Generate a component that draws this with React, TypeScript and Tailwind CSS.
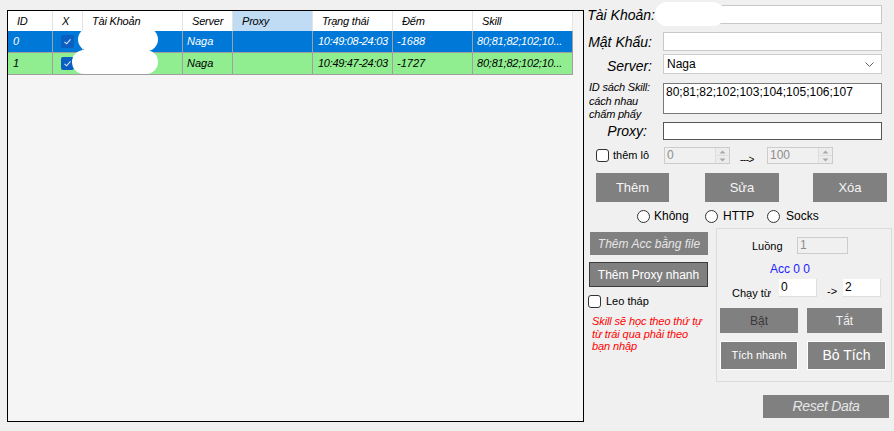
import React from 'react';

const cols = [
  { w: 'w-[45px]', h: 'ID' },
  { w: 'w-[30px]', h: 'X' },
  { w: 'w-[100px]', h: 'Tài Khoản' },
  { w: 'w-[50px]', h: 'Server' },
  { w: 'w-[80px]', h: 'Proxy' },
  { w: 'w-[80px]', h: 'Trạng thái' },
  { w: 'w-[80px]', h: 'Đếm' },
  { w: 'w-[100px]', h: 'Skill' },
];

const rows = [
  { bg: 'bg-[#0078d7] text-white', id: '0', time: '10:49:08-24:03', dem: '-1688' },
  { bg: 'bg-[#90ee90] text-black', id: '1', time: '10:49:47-24:03', dem: '-1727' },
];

function RowCheck() {
  return (
    <span className="w-[13px] h-[13px] rounded-[2px] bg-[#0a5fc0] flex items-center justify-center">
      <svg width="9" height="9" viewBox="0 0 9 9">
        <path d="M1.5 4.8 L3.6 6.8 L7.5 2.4" fill="none" stroke="#dbe9f8" strokeWidth="1.1" />
      </svg>
    </span>
  );
}

function Box() {
  return <span className="w-[13px] h-[13px] rounded-[3px] border border-[#333333] bg-white shrink-0" />;
}

function Radio() {
  return <span className="w-[13px] h-[13px] rounded-full border border-[#333333] bg-white shrink-0" />;
}

function Spin({ v }: { v: string }) {
  return (
    <div className="w-[66px] h-[17px] border border-[#cccccc] bg-[#f0f0f0] flex">
      <span className="flex-1 pl-[2px] text-[12px] leading-[15px] text-[#8d8d8d]">{v}</span>
      <div className="w-[14px] flex flex-col border-l border-[#dddddd]">
        <div className="flex-1 flex items-center justify-center bg-[#ececec] border-b border-[#dddddd]">
          <svg width="7" height="4" viewBox="0 0 7 4"><path d="M0.5 3.5 L3.5 0.5 L6.5 3.5Z" fill="#a8a8a8" /></svg>
        </div>
        <div className="flex-1 flex items-center justify-center bg-[#ececec]">
          <svg width="7" height="4" viewBox="0 0 7 4"><path d="M0.5 0.5 L3.5 3.5 L6.5 0.5Z" fill="#a8a8a8" /></svg>
        </div>
      </div>
    </div>
  );
}

export default function App() {
  return (
    <div className="relative w-[894px] h-[431px] bg-[#f0f0f0] flex font-['Liberation_Sans',Arial,sans-serif] text-black overflow-hidden">
      {/* grid */}
      <div className="ml-[7px] mt-[10px] w-[577px] h-[412px] border border-black bg-[#f5f5f5] shrink-0">
        <div className="flex h-[20px]">
          {cols.map((c, i) => (
            <div
              key={i}
              className={`${c.w} h-full border-r border-[#e3e3e3] pl-[9px] text-[11px] italic leading-[20px] tracking-[-0.2px] ${
                c.h === 'Proxy' ? 'bg-[#bfdcf4]' : 'bg-white'
              }`}
            >
              {c.h}
            </div>
          ))}
        </div>
        {rows.map((r, ri) => (
          <div key={ri} className={`flex h-[22px] w-[565px] border-b border-[#a0a0a0] ${r.bg}`}>
            <div className="w-[45px] border-r border-[#a0a0a0] pl-[5px] text-[11px] italic leading-[21px]">{r.id}</div>
            <div className="w-[30px] border-r border-[#a0a0a0] flex items-center justify-center">
              <RowCheck />
            </div>
            <div className="w-[100px] border-r border-[#a0a0a0]" />
            <div className="w-[50px] border-r border-[#a0a0a0] pl-[4px] text-[11px] italic leading-[21px]">Naga</div>
            <div className="w-[80px] border-r border-[#a0a0a0]" />
            <div className="w-[80px] border-r border-[#a0a0a0] pl-[5px] text-[11px] italic leading-[21px] tracking-[-0.3px] whitespace-nowrap overflow-hidden">{r.time}</div>
            <div className="w-[80px] border-r border-[#a0a0a0] pl-[4px] text-[11px] italic leading-[21px]">{r.dem}</div>
            <div className="w-[100px] border-r border-[#a0a0a0] pl-[4px] text-[11px] italic leading-[21px] tracking-[-0.2px] whitespace-nowrap overflow-hidden">80;81;82;102;10...</div>
          </div>
        ))}
      </div>

      {/* right panel */}
      <div className="w-[310px] flex flex-col pt-[5px] shrink-0">
        <div className="flex h-[19px] items-center">
          <div className="w-[79px] pr-[8px] text-right text-[14px] italic pt-[2px]">Tài Khoản:</div>
          <div className="w-[219px] h-[19px] bg-white border border-[#c8c8c8]" />
        </div>
        <div className="flex h-[19px] items-center mt-[8px]">
          <div className="w-[79px] pr-[11px] text-right text-[14px] italic pt-[2px]">Mật Khẩu:</div>
          <div className="w-[219px] h-[19px] bg-white border border-[#c8c8c8]" />
        </div>
        <div className="flex h-[20px] items-center mt-[3px]">
          <div className="w-[79px] pr-[11px] text-right text-[14px] italic pt-[4px]">Server:</div>
          <div className="w-[219px] h-[20px] bg-white border border-[#cccccc] flex items-center justify-between pl-[3px] pr-[7px] text-[12px]">
            <span>Naga</span>
            <svg width="9" height="5" viewBox="0 0 9 5"><path d="M0.5 0.5 L4.5 4.5 L8.5 0.5" fill="none" stroke="#606060" strokeWidth="1" /></svg>
          </div>
        </div>
        <div className="flex h-[31px] mt-[9px]">
          <div className="w-[79px] h-[31px] pl-[5px] text-[11px] italic leading-[13.5px] -mt-[2px] tracking-[-0.2px] whitespace-nowrap">
            ID sách Skill:<br />cách nhau<br />chấm phẩy
          </div>
          <div className="w-[219px] h-[31px] bg-white border border-[#7a7a7a] text-[12px] leading-[14px] pl-[2px] pt-[1px]">
            80;81;82;102;103;104;105;106;107
          </div>
        </div>
        <div className="flex h-[18px] items-center mt-[8px]">
          <div className="w-[79px] pr-[16px] text-right text-[14px] italic">Proxy:</div>
          <div className="w-[219px] h-[18px] bg-white border border-[#555555]" />
        </div>
        <div className="flex h-[17px] items-center mt-[7px]">
          <div className="w-[80px] pl-[12px] flex items-center gap-[4px]">
            <Box />
            <span className="text-[11px]">thêm lô</span>
          </div>
          <Spin v="0" />
          <div className="w-[37px] pl-[10px] text-[10px] pt-[8px] tracking-[-0.5px]">---&gt;</div>
          <Spin v="100" />
        </div>
        <div className="flex h-[29px] mt-[9px] pl-[12px]">
          <div className="w-[73px] bg-[#808080] text-[#f5f5f5] text-[13px] flex items-center justify-center">Thêm</div>
          <div className="w-[74px] ml-[36px] bg-[#808080] text-[#f5f5f5] text-[13px] flex items-center justify-center">Sửa</div>
          <div className="w-[74px] ml-[34px] bg-[#808080] text-[#f5f5f5] text-[13px] flex items-center justify-center">Xóa</div>
        </div>
        <div className="flex h-[14px] items-center mt-[7px] pl-[53px] text-[12px]">
          <div className="w-[68px] flex items-center gap-[4px]"><Radio /><span>Không</span></div>
          <div className="w-[62px] flex items-center gap-[5px]"><Radio /><span>HTTP</span></div>
          <div className="flex items-center gap-[6px]"><Radio /><span>Socks</span></div>
        </div>

        <div className="flex mt-[5px]">
          <div className="w-[132px] pl-[6px] pt-[4px] flex flex-col">
            <div className="w-[118px] h-[23px] bg-[#808080] text-[#e6e6e6] italic text-[12px] flex items-center justify-center">Thêm Acc bằng file</div>
            <div className="w-[119px] h-[25px] -ml-[1px] mt-[7px] bg-[#808080] border border-[#3c3c3c] text-white text-[12px] flex items-center justify-center">Thêm Proxy nhanh</div>
            <div className="flex items-center h-[13px] mt-[8px] -ml-[2px] gap-[5px]">
              <Box />
              <span className="text-[11px]">Leo tháp</span>
            </div>
            <div className="mt-[7px] ml-[2px] text-[11px] italic leading-[12.5px] text-[#ff0000] tracking-[-0.1px]">
              Skill sẽ học theo thứ tự<br />từ trái qua phải theo<br />bạn nhập
            </div>
          </div>
          <div className="w-[176px] h-[154px] border border-[#dcdcdc] flex flex-col">
            <div className="flex items-center h-[17px] mt-[8px] pl-[35px]">
              <span className="w-[45px] text-[11px] pt-[2px]">Luồng</span>
              <div className="w-[51px] h-[17px] border border-[#cccccc] bg-[#f0f0f0] text-[12px] leading-[15px] pl-[2px] text-[#8d8d8d]">1</div>
            </div>
            <div className="mt-[8px] pl-[53px] h-[14px] text-[12px] leading-[14px] text-[#2020ff]">Acc 0 0</div>
            <div className="flex h-[18px] mt-[3px] pl-[15px]">
              <span className="w-[47px] text-[11px] pt-[6px]">Chạy từ</span>
              <div className="w-[38px] h-[18px] bg-white border-b border-r border-[#dddddd] text-[12px] leading-[16px] pl-[2px]">0</div>
              <span className="w-[26px] pl-[10px] text-[11px] pt-[4px]">-&gt;</span>
              <div className="w-[38px] h-[18px] bg-white border-b border-r border-[#dddddd] text-[12px] leading-[16px] pl-[2px]">2</div>
            </div>
            <div className="flex h-[25px] mt-[11px] pl-[3px] gap-[9px]">
              <div className="w-[78px] bg-[#808080] text-[#3a3a3a] text-[12px] flex items-center justify-center">Bật</div>
              <div className="w-[75px] bg-[#808080] text-[#f0f0f0] text-[12px] flex items-center justify-center">Tắt</div>
            </div>
            <div className="flex h-[29px] mt-[8px] pl-[3px] gap-[9px]">
              <div className="w-[78px] bg-[#808080] border border-white text-white text-[11px] flex items-center justify-center">Tích nhanh</div>
              <div className="w-[79px] bg-[#808080] border border-white text-white text-[14px] flex items-center justify-center">Bỏ Tích</div>
            </div>
          </div>
        </div>
        <div className="ml-[179px] mt-[13px] w-[126px] h-[23px] bg-[#808080] text-[#e6e6e6] italic text-[14px] flex items-center justify-center tracking-[-0.3px]">Reset Data</div>
      </div>

      {/* redaction blobs */}
      <div className="absolute left-[78px] top-[28px] w-[80px] h-[23px] rounded-full bg-white" />
      <div className="absolute left-[72px] top-[50px] w-[86px] h-[24px] rounded-full bg-white" />
      <div className="absolute left-[655px] top-[2px] w-[70px] h-[24px] rounded-full bg-white" />
    </div>
  );
}
